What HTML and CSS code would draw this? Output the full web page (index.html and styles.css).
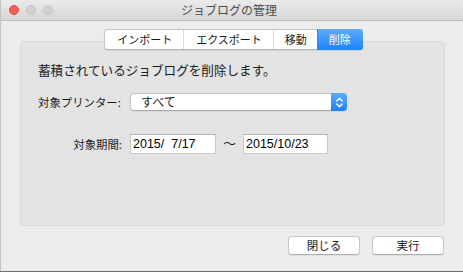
FILE: index.html
```html
<!DOCTYPE html>
<html lang="ja">
<head>
    <meta charset="UTF-8">
    <title>ジョブログの管理</title>
    <link rel="stylesheet" href="styles.css">
</head>
<body>
    <div class="window">
        <div class="titlebar">
            <div class="lights">
                <span class="light close"></span>
                <span class="light"></span>
                <span class="light"></span>
            </div>
            <div class="title">ジョブログの管理</div>
        </div>

        <div class="content">
            <div class="tabs">
                <div class="tab">インポート</div>
                <div class="tab">エクスポート</div>
                <div class="tab">移動</div>
                <div class="tab active">削除</div>
            </div>

            <div class="panel">
                <p class="desc">蓄積されているジョブログを削除します。</p>

                <div class="form">
                    <label class="label">対象プリンター:</label>
                    <div class="popup">
                        <span class="popup-text">すべて</span>
                        <span class="popup-arrow">
                            <svg width="15" height="17" viewBox="0 0 15 17">
                                <path d="M4.8 7 L7.5 4.3 L10.2 7" fill="none" stroke="#fff" stroke-width="1.4" stroke-linecap="round" stroke-linejoin="round"/>
                                <path d="M4.8 10 L7.5 12.7 L10.2 10" fill="none" stroke="#fff" stroke-width="1.4" stroke-linecap="round" stroke-linejoin="round"/>
                            </svg>
                        </span>
                    </div>

                    <label class="label">対象期間:</label>
                    <div class="range">
                        <div class="field">2015/&nbsp;&nbsp;7/17</div>
                        <span class="tilde">〜</span>
                        <div class="field">2015/10/23</div>
                    </div>
                </div>
            </div>

            <div class="buttons">
                <button class="btn">閉じる</button>
                <button class="btn">実行</button>
            </div>
        </div>
    </div>
</body>
</html>
```

FILE: styles.css
```css
body {
    margin: 0;
    font-family: "Noto Sans CJK JP", "Liberation Sans", sans-serif;
    font-size: 12px;
    color: #1a1a1a;
    background-color: #6e6e6e;
}

.window {
    width: 463px;
    height: 271px;
    box-sizing: border-box;
    background-color: #ececec;
    border-left: 1px solid #c4c4c4;
    display: flex;
    flex-direction: column;
}

.titlebar {
    height: 20px;
    flex-shrink: 0;
    display: flex;
    align-items: center;
    background: linear-gradient(#ebebeb, #d6d6d6);
    border-bottom: 1px solid #bcbcbc;
}

.lights {
    display: flex;
    gap: 7px;
    padding-left: 8px;
    margin-top: -1px;
}

.light {
    width: 10px;
    height: 10px;
    border-radius: 50%;
    box-sizing: border-box;
    background-color: #d2d2d2;
    border: 1px solid #c3c3c3;
}

.light.close {
    background-color: #fc5f57;
    border-color: #e0443e;
}

.title {
    flex: 1;
    text-align: center;
    margin-left: -58px;
    color: #4c4c4c;
    font-size: 12px;
    line-height: 20px;
}

.content {
    flex: 1;
    padding: 8px 18px 0 19px;
    display: flex;
    flex-direction: column;
}

.tabs {
    align-self: center;
    display: flex;
    height: 19px;
    margin-bottom: -9px;
    margin-left: 2px;
    background-color: #fff;
    border: 1px solid #c6c6c6;
    border-bottom-color: #b4b4b4;
    border-radius: 4px;
    box-shadow: 0 1px 1px rgba(0, 0, 0, 0.08);
    position: relative;
    z-index: 1;
}

.tab {
    padding: 0 11px 0 12px;
    font-size: 11px;
    line-height: 19px;
    color: #1a1a1a;
    border-left: 1px solid #d8d8d8;
}

.tab:first-child {
    border-left: none;
}

.tab:nth-child(3) {
    padding: 0 10px 0 11px;
}

.tab.active {
    color: #fff;
    background: linear-gradient(#5cabfc, #1f82f8);
    border-left-color: #2f8af8;
    border-radius: 0 3px 3px 0;
    margin: -1px -1px -1px 0;
    padding: 1px 12px 1px 11px;
}

.panel {
    height: 185px;
    box-sizing: border-box;
    background-color: #e3e3e3;
    border: 1px solid #d9d9d9;
    border-radius: 4px;
    padding: 20px 17px 0 17px;
}

.desc {
    margin: 0;
    font-size: 12.6px;
    line-height: 16px;
}

.form {
    display: grid;
    grid-template-columns: 84px auto;
    grid-template-rows: 18px 20px;
    column-gap: 8px;
    row-gap: 23px;
    margin-top: 15px;
    align-items: center;
    font-size: 11.4px;
}

.label {
    text-align: right;
    white-space: nowrap;
}

.form .label:first-child {
    text-align: left;
}

.popup {
    width: 217px;
    height: 18px;
    box-sizing: border-box;
    display: flex;
    background-color: #fff;
    border: 1px solid #c4c4c4;
    border-bottom-color: #aaaaaa;
    border-radius: 4px;
    box-shadow: 0 1px 1px rgba(0, 0, 0, 0.06);
}

.popup-text {
    flex: 1;
    padding-left: 10px;
    font-size: 12px;
    line-height: 16px;
}

.popup-arrow {
    width: 16px;
    margin: -1px -1px -1px 0;
    display: flex;
    align-items: center;
    justify-content: center;
    background: linear-gradient(#5cabfc, #1f82f8);
    border-radius: 0 4px 4px 0;
}

.range {
    display: flex;
    align-items: center;
}

.field {
    height: 20px;
    width: 86px;
    box-sizing: border-box;
    background-color: #fff;
    border: 1px solid #c9c9c9;
    border-top-color: #b3b3b3;
    padding-left: 2px;
    font-family: "Liberation Sans", sans-serif;
    font-size: 12.5px;
    line-height: 19px;
    color: #000;
    white-space: nowrap;
}

.field:last-child {
    width: 85px;
}

.tilde {
    width: 27px;
    text-align: center;
    font-size: 13px;
    margin-top: -3px;
}

.buttons {
    display: flex;
    justify-content: flex-end;
    gap: 12px;
    margin-top: 10px;
    padding-right: 1px;
}

.btn {
    width: 72px;
    height: 19px;
    padding: 0;
    font-family: "Noto Sans CJK JP", sans-serif;
    font-size: 11.5px;
    line-height: 17px;
    color: #1a1a1a;
    background-color: #fff;
    border: 1px solid #c6c6c6;
    border-bottom-color: #adadad;
    border-radius: 4px;
    box-shadow: 0 1px 1px rgba(0, 0, 0, 0.06);
}
```
